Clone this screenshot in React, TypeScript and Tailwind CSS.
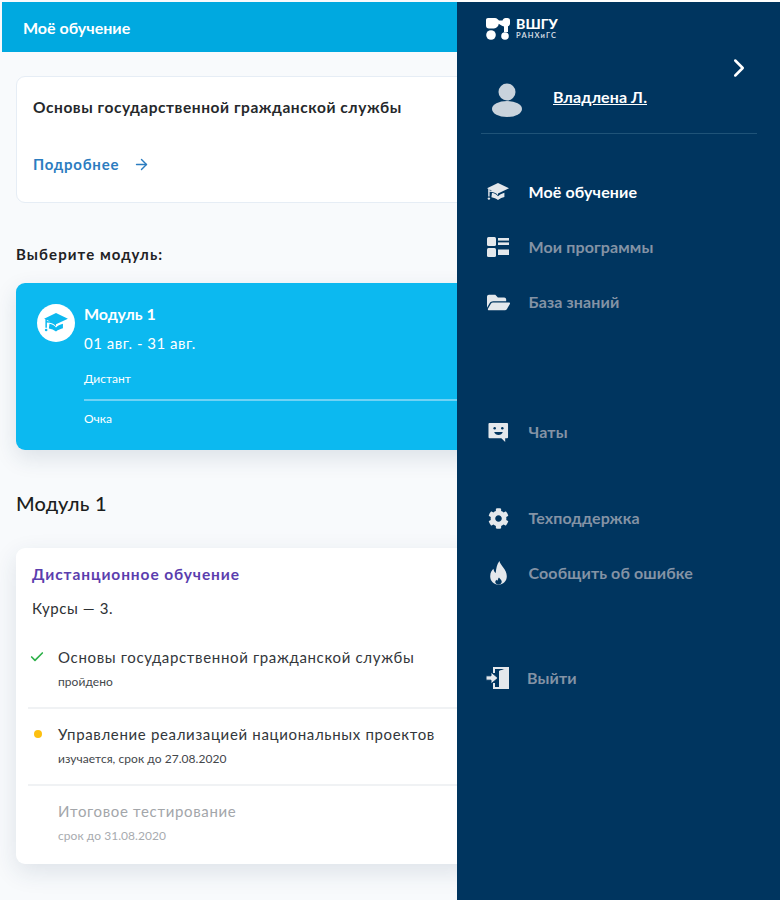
import React from "react";
import { FaCog, FaFolderOpen } from "react-icons/fa";
import { ChevronRight, ArrowRight, Check } from "lucide-react";

const Cap = ({ className }: { className?: string }) => (
  <svg viewBox="0 0 24 20" className={className} fill="currentColor">
    <path d="M12 1 23 6.200 12 11.400 3.600 7.400 3.600 8.400C8 8.600 11 10 12 11.400L12 13.200C10.500 11.200 7.500 10 3.600 9.800V14.500L2.200 14.500V6.700L1 6.200Z" />
    <path d="M6 10.800C8.400 11.200 10.600 12.400 12 14.200 13.400 12.800 15.600 11.600 18.400 10.800V15C16.500 15.500 14 16.400 12 18 10 16.400 8 15.600 5.400 15.200Z" />
    <circle cx="2.900" cy="16.600" r="1.200" />
  </svg>
);

const Logo = () => (
  <svg viewBox="0 0 24 23" className="h-[23px] w-[24px] text-white" fill="currentColor">
    <circle cx="5" cy="18" r="4.800" />
    <circle cx="19" cy="19" r="3.800" />
    <path d="M2 1H9C11 1 12 2.500 13 3.500H16.500C17 2 18 1 19.500 1H21.500C23 1 24 2 24 3.500V6.500C24 8 23 9 22 9.300V15H18V9.500C16 9 14 8 12.800 6.800 12.300 9.500 10.500 11.500 8 11.500H3C1 11.500 0 10.500 0 8.500V3C0 1.800 .8 1 2 1Z" />
  </svg>
);

const Programs = () => (
  <svg viewBox="0 0 24 20" className="h-[20px] w-[24px]" fill="currentColor">
    <rect x="1" y="0" width="9" height="9" rx="1.500" />
    <rect x="1" y="11" width="9" height="9" rx="1.500" />
    <rect x="12" y="1" width="11" height="2.600" />
    <rect x="12" y="5.400" width="11" height="2.600" />
    <rect x="12" y="12.500" width="11" height="5.500" />
  </svg>
);

const Chat = () => (
  <svg viewBox="0 0 22 22" className="h-[21px] w-[21px]">
    <path fill="currentColor" d="M1.500 1H20a1 1 0 0 1 1 1v14a1 1 0 0 1-1 1h-2v4l-4-4H1.500a1 1 0 0 1-1-1V2a1 1 0 0 1 1-1Z" />
    <circle cx="7" cy="6.500" r="1.300" fill="#00355f" />
    <circle cx="15" cy="6.500" r="1.300" fill="#00355f" />
    <path d="M6.500 10.500h9c-.6 2-2.400 3-4.500 3s-3.900-1-4.500-3Z" fill="#00355f" />
  </svg>
);

const Flame = () => (
  <svg viewBox="0 0 20 26" className="h-[24px] w-[19px]">
    <path fill="currentColor" d="M11 0C12 5 19 9 19 16.500 19 22 15 25.500 10 25.500S1 22 1 16.500C1 12.500 3 10 4.500 8.500 4.800 10.500 5.500 12 7 13 7.500 8 8 4 11 0Z" />
    <path fill="#00355f" d="M10.500 18C11.500 19.500 13.500 20.500 13.500 22.500 13.500 24 12 25.500 10 25.500S6.500 24 6.500 22.700C6.500 21.500 7.500 20.800 8.200 20.300 8.500 20.800 8.800 21 9.300 21.300 9.300 20.300 9.500 19.200 10.500 18Z" />
  </svg>
);

const Exit = () => (
  <svg viewBox="0 0 24 24" className="h-[24px] w-[24px]">
    <path fill="currentColor" d="M7 1H23V23H7V17H9V21H13V5L19 3H9V7H7Z" />
    <path fill="currentColor" d="M13 5 19 3H23V23H13Z" />
    <path fill="currentColor" stroke="#00355f" strokeWidth="1" d="M0 9.800H5V6L12 12 5 18V14.200H0Z" />
  </svg>
);

const Nav = ({ icon, label, active, className, tight }: { icon: React.ReactNode; label: string; active?: boolean; className: string; tight?: boolean }) => (
  <div className={`flex h-[24px] items-center ${className}`}>
    <span className="flex w-[24px] shrink-0 justify-center text-[#e4e8ec]">{icon}</span>
    <span className={`${tight ? "ml-[17px]" : "ml-[18.500px]"} text-[16px] font-bold leading-[20px] tracking-[0.12px] ${active ? "text-white" : "text-[#8493a5]"}`}>{label}</span>
  </div>
);

const Course = ({ mark, title, sub, muted, border }: { mark?: React.ReactNode; title: string; sub: string; muted?: boolean; border?: boolean }) => (
  <div className={`flex h-[77px] pl-[1px] pt-[15px] ${border ? "border-b-2 border-[#f0f2f4]" : ""}`}>
    <span className="flex h-[20px] w-[29px] shrink-0 items-center">{mark}</span>
    <div>
      <div className={`text-[15px] leading-[20px] tracking-[0.66px] ${muted ? "text-[#a3a6aa]" : "text-[#33373b]"}`}>{title}</div>
      <div className={`mt-[7px] text-[12px] leading-[16px] tracking-[0.05px] ${muted ? "text-[#a8abaf]" : "text-[#43474b]"}`}>{sub}</div>
    </div>
  </div>
);

export default function App() {
  return (
    <div className="flex h-[900px] w-[780px] overflow-hidden bg-white font-['Lato','Noto_Sans',sans-serif]">
      <main className="h-full w-[457px] shrink-0 overflow-hidden bg-[#f8fafc]">
        <div className="ml-[2px] mt-[2px] flex h-[50px] items-center bg-[#00a9e0] pl-[21px] pt-[1px] text-[16px] font-bold text-white">
          Моё обучение
        </div>

        <section className="ml-[16px] mr-[-20px] mt-[24px] h-[127px] rounded-[9px] border border-[#e6edf5] bg-white pl-[16px] pt-[20px]">
          <div className="text-[15.500px] font-bold leading-[20px] tracking-[0.56px] text-[#25282b]">Основы государственной гражданской службы</div>
          <div className="mt-[37px] flex items-center text-[15px] font-bold leading-[20px] tracking-[0.75px] text-[#2b7cc0]">
            Подробнее
            <ArrowRight className="ml-[14px] size-[17px]" strokeWidth={2} />
          </div>
        </section>

        <h2 className="ml-[16px] mt-[41px] text-[15px] font-bold leading-[20px] tracking-[1.100px] text-[#1f2225]">Выберите модуль:</h2>

        <section className="ml-[16px] mr-[-20px] mt-[19px] flex h-[167px] rounded-[9px] bg-[#0cb9f0] pl-[21px] pt-[21px] shadow-[0_8px_22px_rgba(30,60,90,0.13)]">
          <span className="flex size-[38px] shrink-0 items-center justify-center rounded-full bg-white text-[#0cb9f0]">
            <Cap className="w-[26px]" />
          </span>
          <div className="ml-[9px] flex-1 text-white">
            <div className="text-[16px] font-bold leading-[20px]">Модуль 1</div>
            <div className="mt-[9px] text-[15px] leading-[20px] tracking-[0.5px]">01 авг. - 31 авг.</div>
            <div className="mt-[18px] border-b-2 border-[#6fd2f5] pb-[12px] text-[12px] leading-[16px]">Дистант</div>
            <div className="mt-[10px] text-[12px] leading-[16px]">Очка</div>
          </div>
        </section>

        <h2 className="ml-[16px] mt-[40px] text-[20px] font-medium leading-[26px] tracking-[0.25px] text-[#1c1e20]">Модуль 1</h2>

        <section className="ml-[16px] mr-[-20px] mt-[32px] h-[316px] rounded-[9px] bg-white pl-[16px] pt-[16px] shadow-[0_8px_24px_rgba(30,60,90,0.12)]">
          <div className="text-[15.500px] font-bold leading-[20px] tracking-[0.9px] text-[#5b3eae]">Дистанционное обучение</div>
          <div className="mt-[14px] text-[15px] leading-[20px] tracking-[0.6px] text-[#2d3033]">Курсы — 3.</div>
          <div className="ml-[-4px] mt-[14px]">
            <Course
              border
              mark={<Check className="size-[16px] text-[#2eb14a]" strokeWidth={2.500} />}
              title="Основы государственной гражданской службы"
              sub="пройдено"
            />
            <Course
              border
              mark={<span className="ml-[5px] size-[8px] rounded-full bg-[#fdc010]" />}
              title="Управление реализацией национальных проектов"
              sub="изучается, срок до 27.08.2020"
            />
            <Course muted title="Итоговое тестирование" sub="срок до 31.08.2020" />
          </div>
        </section>
      </main>

      <aside className="relative mt-[2px] h-[898px] flex-1 bg-[#00355f] pl-[29px] text-white">
        <div className="flex items-center pt-[15px]">
          <Logo />
          <div className="ml-[6px]">
            <div className="text-[14px] font-black leading-[13px] tracking-[0.1px]">ВШГУ</div>
            <div className="mt-[2px] text-[7.500px] font-bold leading-[8px] tracking-[1.100px] text-[#cfd8e0]">РАНХиГС</div>
          </div>
        </div>

        <ChevronRight className="absolute left-[267px] top-[51px] size-[30px] text-white" strokeWidth={2} />

        <div className="ml-[-5px] mr-[23px] flex h-[94px] items-start border-b border-[#1f5378] pl-[5px] pt-[43px]">
          <svg viewBox="0 0 30 34" className="ml-[6px] h-[34px] w-[30px] text-[#c9d3dc]" fill="currentColor">
            <circle cx="15" cy="9" r="8.500" />
            <ellipse cx="15" cy="26" rx="15" ry="8" />
          </svg>
          <span className="ml-[31px] mt-[4px] text-[16px] font-bold leading-[20px] tracking-[0.1px] text-white underline">Владлена Л.</span>
        </div>

        <Nav className="mt-[46px]" active icon={<Cap className="w-[25px]" />} label="Моё обучение" />
        <Nav className="mt-[31px]" icon={<Programs />} label="Мои программы" />
        <Nav className="mt-[31px]" icon={<FaFolderOpen className="size-[23px]" />} label="База знаний" />
        <Nav className="mt-[106px]" icon={<Chat />} label="Чаты" />
        <Nav className="mt-[62px]" icon={<FaCog className="size-[21px]" />} label="Техподдержка" />
        <Nav className="mt-[31px]" icon={<Flame />} label="Сообщить об ошибке" />
        <Nav className="mt-[81px]" tight icon={<Exit />} label="Выйти" />
      </aside>
    </div>
  );
}
